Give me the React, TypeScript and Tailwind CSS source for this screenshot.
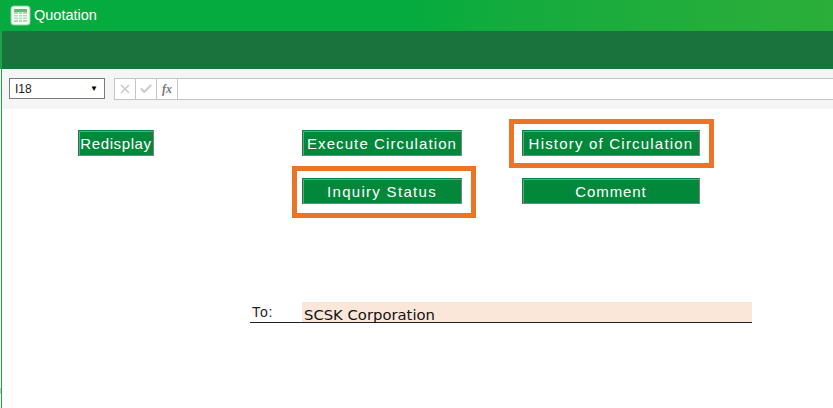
import { Check, X } from "lucide-react"

function SheetIcon() {
  return (
    <svg width="21" height="21" viewBox="0 0 21 21" className="shrink-0">
      <rect x="0.5" y="0.5" width="20" height="20" rx="3.5" fill="#7fd08f" />
      <rect x="1.5" y="1.5" width="18" height="18" rx="2.5" fill="#ffffff" />
      <rect x="4" y="4" width="13" height="13" fill="#5cbf70" />
      <rect x="4" y="7" width="13" height="10" fill="#a5dfb1" />
      <path d="M4 9.5h13M4 12h13M4 14.5h13M8.5 7v10M12.5 7v10" stroke="#ffffff" strokeWidth="1" />
    </svg>
  )
}

function SheetButton({ label, className }: { label: string; className: string }) {
  return (
    <button
      className={`h-[26px] pt-[2px] bg-[#03883b] text-white text-[15px] leading-[22px] whitespace-nowrap font-['Liberation_Sans',sans-serif] border border-t-[#03883b] border-l-[#03883b] border-r-[#808080] border-b-[#808080] shadow-[inset_1px_1px_0_#6f9c82] ${className}`}
    >
      {label}
    </button>
  )
}

export default function App() {
  return (
    <div className="relative w-[833px] h-[408px] overflow-hidden bg-white font-['Liberation_Sans',sans-serif]">
      {/* title bar */}
      <div className="h-[31px] flex items-center gap-[3px] pl-[10px] bg-gradient-to-r from-[#05ab3e] via-[#05ab3e] to-[#2bae3a]">
        <SheetIcon />
        <span className="text-white text-[14.5px]">Quotation</span>
      </div>
      {/* ribbon */}
      <div className="h-[38px] bg-[#18733c] border-l-2 border-[#1fa34a]" />
      <div className="ml-[1px] border-l border-[#1fa34a]">
        {/* formula bar */}
        <div className="h-[40px] bg-[#f5f5f5] flex items-start pt-[9px] pl-[7px]">
          <div className="w-[96px] h-[21px] bg-white border border-[#7a7a7a] flex items-center justify-between pl-[5px] pr-[6px]">
            <span className="text-[12px] text-[#222]">I18</span>
            <span className="text-[8px] text-black">▼</span>
          </div>
          <div className="ml-[9px] flex-1 h-[22px] flex bg-white border border-[#c4c4c4] border-r-0">
            <div className="w-[21px] border-r border-[#c4c4c4] flex items-center justify-center">
              <X size={14} strokeWidth={3} color="#cccccc" />
            </div>
            <div className="w-[21px] border-r border-[#c4c4c4] flex items-center justify-center">
              <Check size={14} strokeWidth={3.5} color="#cccccc" />
            </div>
            <div className="w-[21px] border-r border-[#c4c4c4] flex items-center justify-center">
              <span className="text-[12px] italic font-bold text-[#777] font-['Liberation_Serif',serif]">fx</span>
            </div>
          </div>
        </div>
        {/* sheet */}
        <div className="h-[299px] pl-[76px] pt-[21px]">
          <div className="grid grid-cols-[224px_220px_178px] grid-rows-[26px_26px] gap-y-[22px]">
            <SheetButton label="Redisplay" className="w-[76px] tracking-[0.6px]" />
            <SheetButton label="Execute Circulation" className="w-[160px] tracking-[1.1px]" />
            <div className="relative">
              <SheetButton label="History of Circulation" className="w-[178px] tracking-[1.2px]" />
              <div className="absolute left-[-13px] top-[-11px] w-[205px] h-[49px] border-[5px] border-[#eb7426]" />
            </div>
            <div />
            <div className="relative">
              <SheetButton label="Inquiry Status" className="w-[160px] tracking-[1.3px]" />
              <div className="absolute left-[-10px] top-[-12px] w-[184px] h-[52px] border-[5px] border-[#eb7426]" />
            </div>
            <SheetButton label="Comment" className="w-[178px] tracking-[0.9px]" />
          </div>
          <div className="mt-[98px] ml-[172px] w-[502px] h-[21px] flex border-b border-[#222]">
            <span className="w-[52px] pl-[2px] pt-[1px] text-[14px] leading-[18px] tracking-[0.9px] text-[#222]">To:</span>
            <span className="flex-1 bg-[#fbe7da] pl-[2px] pt-[3px] text-[14.8px] leading-[20px] text-[#111] font-['DejaVu_Sans',sans-serif]">
              SCSK Corporation
            </span>
          </div>
        </div>
      </div>
      {/* scroll stub on the window edge */}
      <div className="absolute left-0 top-[388px] w-[1px] h-[6px] bg-[#c4c4c4]" />
    </div>
  )
}
